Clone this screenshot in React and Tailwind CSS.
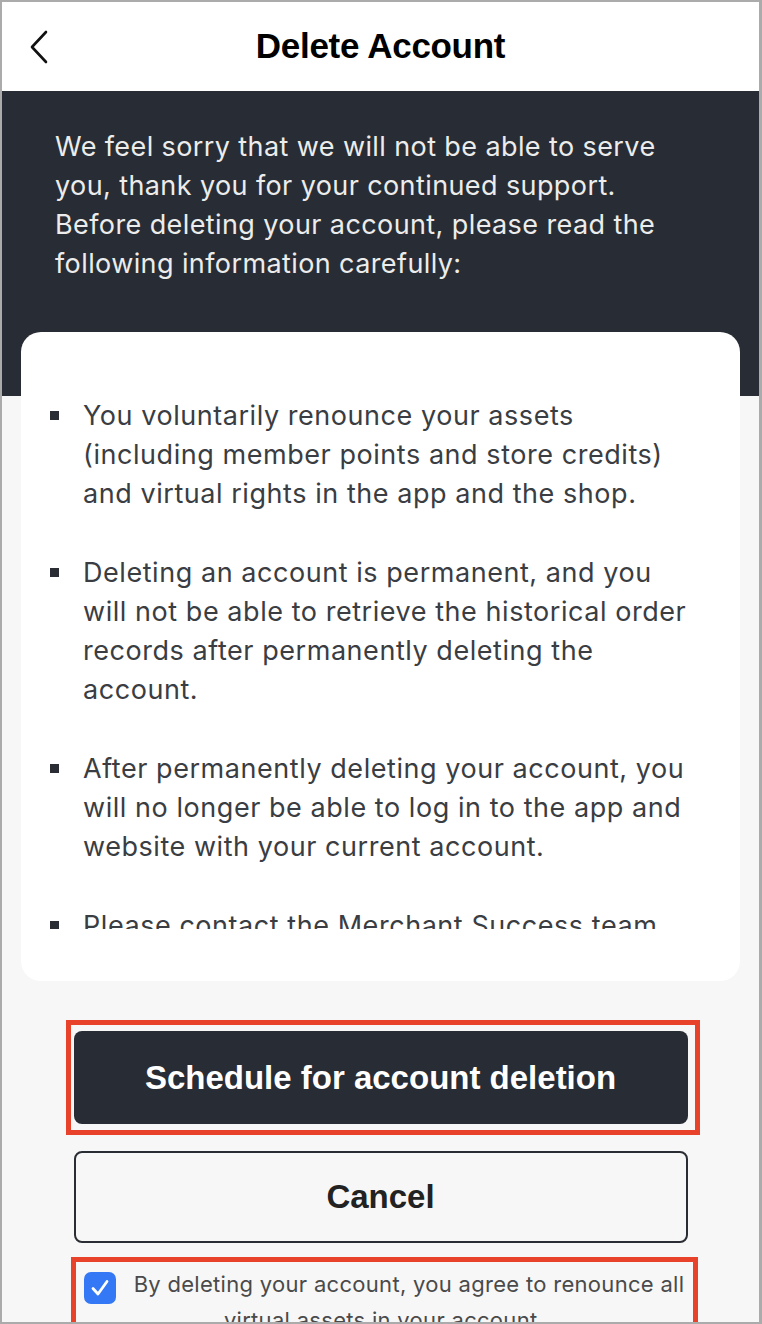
import React, { useState } from 'react';

const items = [
    'You voluntarily renounce your assets (including member points and store credits) and virtual rights in the app and the shop.',
    'Deleting an account is permanent, and you will not be able to retrieve the historical order records after permanently deleting the account.',
    'After permanently deleting your account, you will no longer be able to log in to the app and website with your current account.',
    'Please contact the Merchant Success team before deleting your account if you have any questions.',
];

const BackIcon = () => (
    <svg width="20" height="34" viewBox="0 0 20 34" fill="none">
        <path d="M17 2 L3 17 L17 32" stroke="#111" strokeWidth="2.6" strokeLinecap="round" strokeLinejoin="round" />
    </svg>
);

const App = () => {
    const [agreed, setAgreed] = useState(true);

    return (
        <div className="w-[762px] h-[1324px] overflow-hidden border-2 border-r-[3px] border-[#ababab] bg-[#f7f7f7] flex flex-col font-['Inter',sans-serif]">
            {/* header */}
            <div className="relative h-[89px] shrink-0 bg-white flex items-center justify-center">
                <button className="absolute left-[27px] top-[28px]"><BackIcon /></button>
                <h1 className="text-[35px] font-bold text-black font-['Liberation_Sans',sans-serif] tracking-[-0.3px]">Delete Account</h1>
            </div>

            {/* intro */}
            <div className="h-[305px] shrink-0 bg-[#282c34] pt-[36px] px-[53px]">
                <p className="text-[27px] leading-[39px] tracking-[0.4px] text-[#ececec] max-w-[645px]">
                    We feel sorry that we will not be able to serve you, thank you for your continued support. Before deleting your account, please read the following information carefully:
                </p>
            </div>

            {/* card */}
            <div className="relative mx-[19px] -mt-[64px] h-[649px] shrink-0 bg-white rounded-[20px] pt-[64px] pb-[52px] pl-[29px] pr-[46px]">
                <div className="h-[533px] overflow-hidden flex flex-col gap-[40px]">
                    {items.map((t, i) => (
                        <div key={i} className="flex items-start">
                            <span className="w-[9px] h-[9px] bg-[#2a2d33] mt-[15px] mr-[24px] shrink-0"></span>
                            <p className="text-[27px] leading-[39px] tracking-[0.55px] text-[#3a3d42]">{t}</p>
                        </div>
                    ))}
                </div>
            </div>

            {/* actions */}
            <div className="flex flex-col items-center pt-[39px]">
                <div className="border-[5px] border-[#e8432a] pl-[3px] pr-[7px] py-[6px] ml-[4px]">
                    <button className="w-[614px] h-[93px] rounded-[8px] bg-[#282c34] text-white text-[33px] font-bold font-['Liberation_Sans',sans-serif]">
                        Schedule for account deletion
                    </button>
                </div>
                <button className="mt-[16px] w-[614px] h-[92px] rounded-[8px] border-2 border-[#2a2d33] text-[#222] text-[33px] font-bold font-['Liberation_Sans',sans-serif]">
                    Cancel
                </button>
                <div className="mt-[14px] ml-[7px] w-[627px] border-[5px] border-b-0 border-[#e8432a] pt-[6px] px-[3px] h-[70px]">
                    <p className="text-center text-[22px] leading-[33px] tracking-[0.3px] text-[#4a4a4a]">
                        <span
                            onClick={() => setAgreed(!agreed)}
                            className={`inline-flex align-[-7px] mr-[18px] w-[32px] h-[32px] rounded-[7px] items-center justify-center ${agreed ? 'bg-[#3478f6]' : 'bg-white border border-gray-400'}`}
                        >
                            {agreed && (
                                <svg width="22" height="22" viewBox="0 0 22 22" fill="none">
                                    <path d="M4 11.5 L9 17 L18 4.5" stroke="white" strokeWidth="2.8" strokeLinecap="round" strokeLinejoin="round" />
                                </svg>
                            )}
                        </span>
                        By deleting your account, you agree to renounce all virtual assets in your account.
                    </p>
                </div>
            </div>
        </div>
    );
};

export default App;
